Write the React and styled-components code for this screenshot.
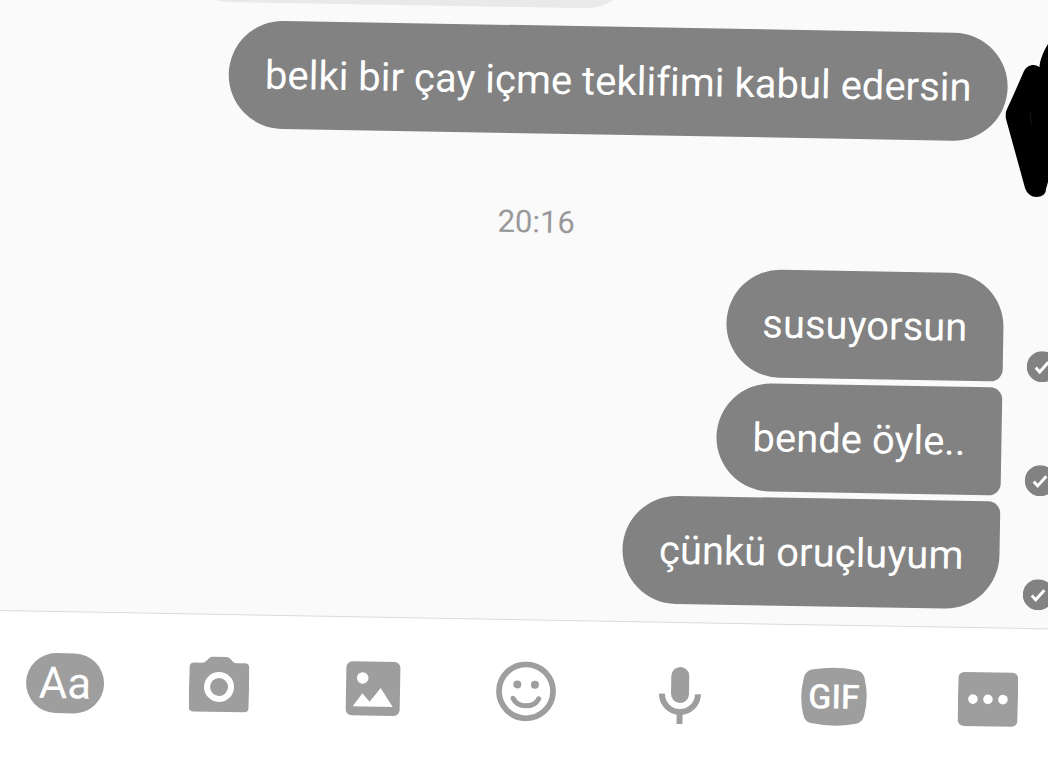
import React from 'react';
import styled, { createGlobalStyle, ThemeProvider } from 'styled-components';

const theme = {
  background: '#fafafa',
  white: '#ffffff',
  bubble: '#828282',
  received: '#e9e9e9',
  icon: '#9e9e9e',
  border: '#dadada',
  time: '#999999',
  font: "Roboto, 'Liberation Sans', sans-serif",
};

const GlobalStyle = createGlobalStyle`
  *, *::before, *::after {
    box-sizing: border-box;
  }

  body {
    margin: 0;
    background-color: ${theme.background};
    font-family: ${theme.font};
  }
`;

const Viewport = styled.div`
  position: relative;
  height: 100vh;
  overflow: hidden;
`;

const Screen = styled.div`
  display: flex;
  flex-direction: column;
  width: calc(100% + 32px);
  height: 100%;
  transform: rotate(1deg);
  transform-origin: top left;
`;

const Thread = styled.main`
  flex: 1;
  min-height: 0;
  display: flex;
  flex-direction: column;
  justify-content: flex-end;
  gap: 6px;
  padding: 0 16px 18px;
`;

const Row = styled.div`
  display: flex;
  flex-shrink: 0;
  align-items: flex-end;
  justify-content: ${({ $received }) => ($received ? 'flex-start' : 'flex-end')};
  gap: 24px;
  margin-bottom: ${({ $received }) => ($received ? '12px' : '0')};
  padding-left: ${({ $received }) => ($received ? '160px' : '0')};
`;

const corners = {
  single: '54px',
  first: '54px 54px 12px 54px',
  middle: '54px 12px 12px 54px',
  last: '54px 12px 54px 54px',
};

const Bubble = styled.p`
  margin: 0;
  padding: 31px 36px 29px;
  border-radius: ${({ $position }) => corners[$position]};
  background-color: ${({ theme }) => theme.bubble};
  color: ${({ theme }) => theme.white};
  font-size: 40px;
  font-variant-ligatures: none;
  line-height: 48px;
  white-space: nowrap;
`;

const ReceivedBubble = styled.div`
  width: 462px;
  height: 108px;
  border-radius: 54px;
  background-color: ${({ theme }) => theme.received};
`;

const Status = styled.span`
  display: flex;
  width: 31px;
  height: 31px;

  svg {
    width: 100%;
    height: 100%;
  }
`;

const Time = styled.time`
  flex-shrink: 0;
  padding: 65px 0 19px;
  color: ${({ theme }) => theme.time};
  font-size: 31px;
  line-height: 36px;
  text-align: center;
`;

const Composer = styled.footer`
  display: grid;
  grid-template-columns: repeat(7, 1fr);
  justify-items: center;
  padding: 41px 3px 52px 0;
  border-top: 1px solid ${({ theme }) => theme.border};
  background-color: ${({ theme }) => theme.white};
`;

const ToolButton = styled.button`
  display: flex;
  align-items: center;
  justify-content: center;
  height: 60px;
  padding: 0;
  border: 0;
  background: none;
  color: ${({ theme }) => theme.icon};
  font-family: inherit;
  cursor: pointer;
`;

const TextButton = styled(ToolButton)`
  width: 78px;
  border-radius: 30px;
  background-color: ${({ theme }) => theme.icon};
  color: ${({ theme }) => theme.white};
  font-size: 44px;
  line-height: 60px;
`;

const Scribble = styled.svg`
  position: absolute;
  top: 0;
  right: 0;
`;

const Check = () => (
  <Status role="img" aria-label="sent">
    <svg viewBox="0 0 31 31">
      <circle cx="15.5" cy="15.5" r="15.5" fill="#828282" />
      <path d="M9 16.5l4 4.2 8.5-9.7" fill="none" stroke="#fff" strokeWidth="3" />
    </svg>
  </Status>
);

const CameraIcon = () => (
  <svg width="60" height="60" viewBox="0 0 60 60">
    <path
      d="M5 7H13Q15 7 16.5 5.5L19.5 2.5Q21 1 23 1H37Q39 1 40.5 2.5L43.5 5.5Q45 7 47 7H55Q60 7 60 12V51Q60 56 55 56H5Q0 56 0 51V12Q0 7 5 7Z"
      fill="currentColor"
    />
    <circle cx="30" cy="31" r="12" fill="none" stroke="#fff" strokeWidth="6" />
  </svg>
);

const ImageIcon = () => (
  <svg width="60" height="60" viewBox="0 0 60 60">
    <rect x="3" y="3" width="54" height="54" rx="6" fill="currentColor" />
    <circle cx="19.5" cy="19.5" r="5.8" fill="#fff" />
    <path d="M10 48L19.4 34.7L26.8 43.2L37.6 29.2L50 48Z" fill="#fff" />
  </svg>
);

const SmileIcon = () => (
  <svg width="60" height="60" viewBox="0 0 60 60" fill="none">
    <circle cx="30" cy="30" r="27" stroke="currentColor" strokeWidth="5.8" />
    <circle cx="21.2" cy="23.3" r="4" fill="currentColor" />
    <circle cx="38.8" cy="23.3" r="4" fill="currentColor" />
    <path
      d="M17.2 37.3C22 47 38 47 42.8 37.3"
      stroke="currentColor"
      strokeWidth="5"
      strokeLinecap="round"
    />
  </svg>
);

const MicIcon = () => (
  <svg width="60" height="60" viewBox="0 0 60 60" fill="none">
    <rect x="21" y="3" width="18" height="36" rx="9" fill="currentColor" />
    <path d="M12 30A18 18 0 0 0 48 30M30 48V60" stroke="currentColor" strokeWidth="6" />
  </svg>
);

const GifIcon = () => (
  <svg width="66" height="60" viewBox="0 0 66 60">
    <path
      d="M12 3Q33 -1 54 3Q62 4 63.5 12Q68 30 63.5 48Q62 56 54 57Q33 61 12 57Q4 56 2.5 48Q-2 30 2.5 12Q4 4 12 3Z"
      fill="currentColor"
    />
    <text
      x="33"
      y="42"
      fill="#fff"
      textAnchor="middle"
      fontFamily="Roboto, sans-serif"
      fontSize="34"
      fontWeight="500"
    >
      GIF
    </text>
  </svg>
);

const MoreIcon = () => (
  <svg width="60" height="60" viewBox="0 0 60 60">
    <rect y="3" width="60" height="54" rx="6" fill="currentColor" />
    <circle cx="15" cy="30" r="4.8" fill="#fff" />
    <circle cx="30" cy="30" r="4.8" fill="#fff" />
    <circle cx="45" cy="30" r="4.8" fill="#fff" />
  </svg>
);

const replies = [
  { text: 'susuyorsun', position: 'first' },
  { text: 'bende öyle..', position: 'middle' },
  { text: 'çünkü oruçluyum', position: 'last' },
];

const tools = [
  { label: 'Camera', Icon: CameraIcon },
  { label: 'Gallery', Icon: ImageIcon },
  { label: 'Emoji', Icon: SmileIcon },
  { label: 'Voice', Icon: MicIcon },
  { label: 'GIF', Icon: GifIcon },
  { label: 'More', Icon: MoreIcon },
];

const App = () => (
  <ThemeProvider theme={theme}>
    <GlobalStyle />
    <Viewport>
      <Screen>
        <Thread>
          <Row $received>
            <ReceivedBubble />
          </Row>
          <Row>
            <Bubble $position="single">belki bir çay içme teklifimi kabul edersin</Bubble>
            <Status />
          </Row>
          <Time>20:16</Time>
          {replies.map(({ text, position }) => (
            <Row key={position}>
              <Bubble $position={position}>{text}</Bubble>
              <Check />
            </Row>
          ))}
        </Thread>
        <Composer>
          <TextButton type="button">Aa</TextButton>
          {tools.map(({ label, Icon }) => (
            <ToolButton key={label} type="button" aria-label={label}>
              <Icon />
            </ToolButton>
          ))}
        </Composer>
      </Screen>
      <Scribble width="48" height="200" viewBox="0 0 48 200" aria-hidden="true">
        <path d="M48 44C43 52 40 60 39.5 67C34 63 27 65 24 71L13 96L7 109Q5 113 6 119L25 188C27 194 32 197 36 197C42 197 46 194 46 189L48 182Z" />
        <path d="M31 111Q30 118 31.5 125" fill="none" stroke="#161616" />
      </Scribble>
    </Viewport>
  </ThemeProvider>
);

export default App;
